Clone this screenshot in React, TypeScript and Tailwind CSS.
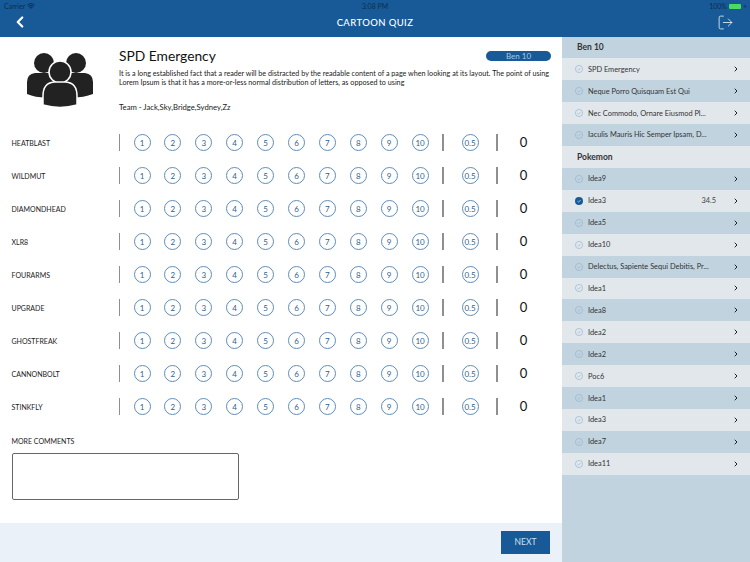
import { ChevronLeft, ChevronRight, LogOut, Wifi } from 'lucide-react';

const contestants = ['HEATBLAST', 'WILDMUT', 'DIAMONDHEAD', 'XLR8', 'FOURARMS', 'UPGRADE', 'GHOSTFREAK', 'CANNONBOLT', 'STINKFLY'];
const scores = ['1', '2', '3', '4', '5', '6', '7', '8', '9', '10'];

const ben10 = ['SPD Emergency', 'Neque Porro Quisquam Est Qui', 'Nec Commodo, Ornare Eiusmod Pl...', 'Iaculis Mauris Hic Semper Ipsam, D...'];
const pokemon = ['Idea9', 'Idea3', 'Idea5', 'Idea10', 'Delectus, Sapiente Sequi Debitis, Pr...', 'Idea1', 'Idea8', 'Idea2', 'Idea2', 'Poc6', 'Idea1', 'Idea3', 'Idea7', 'Idea11'];

function Circle({ label }: { label: string }) {
  return (
    <div className="flex h-[17px] w-[17px] shrink-0 items-center justify-center rounded-full border border-[#5f8db8] text-[8px] text-[#2f5f8f]">
      {label}
    </div>
  );
}

function Row({ name }: { name: string }) {
  return (
    <div className="flex h-[33px] items-center">
      <div className="w-[107px] pt-[1px] text-[7px] text-[#222]">{name}</div>
      <div className="h-[17px] w-[1.5px] bg-[#8f8f8f]" />
      <div className="ml-[13.5px] flex gap-[13.9px]">
        {scores.map((s) => (
          <Circle key={s} label={s} />
        ))}
      </div>
      <div className="ml-[13.5px] h-[17px] w-[1.5px] bg-[#8f8f8f]" />
      <div className="ml-[18px]">
        <Circle label="0.5" />
      </div>
      <div className="ml-[17.5px] h-[17px] w-[1.5px] bg-[#8f8f8f]" />
      <div className="ml-[18px] w-[16px] text-center text-[13px] text-[#111]">0</div>
    </div>
  );
}

function CheckIcon({ done }: { done?: boolean }) {
  return (
    <svg viewBox="0 0 8 8" className="h-[8px] w-[8px] shrink-0">
      <circle cx="4" cy="4" r={done ? 4 : 3.6} fill={done ? '#175a97' : 'none'} stroke={done ? 'none' : '#8fb0cc'} strokeWidth="0.6" />
      <path d="M2.4 4.1 3.6 5.2 5.6 3" fill="none" stroke={done ? '#fff' : '#8fb0cc'} strokeWidth="0.6" />
    </svg>
  );
}

function SideItem({ label, blue, done, score }: { label: string; blue: boolean; done?: boolean; score?: string }) {
  return (
    <div className={`flex h-[21.93px] items-center pl-[13px] pr-[10px] text-[7.4px] text-[#333] ${blue ? 'bg-[#c2d3e0]' : 'bg-[#e2e7ec]'}`}>
      <CheckIcon done={done} />
      <div className="ml-[5px] flex-1 truncate">{label}</div>
      {score && <div className="mr-[16px] text-[#444]">{score}</div>}
      <ChevronRight size={8} strokeWidth={3} className="text-[#222]" />
    </div>
  );
}

function TeamIcon() {
  return (
    <svg viewBox="0 0 66 56" className="h-[56px] w-[66px]" fill="#222">
      <circle cx="17" cy="11" r="10" />
      <circle cx="49" cy="11" r="10" />
      <path d="M0 30 Q0 22 8 21 L26 21 Q34 22 34 30 L34 44 Q14 48 0 42Z" />
      <path d="M32 30 Q32 22 40 21 L58 21 Q66 22 66 30 L66 42 Q50 48 32 44Z" />
      <circle cx="33" cy="20" r="11" stroke="#fff" strokeWidth="1.5" />
      <path d="M16 44 Q16 31 27 30 L39 30 Q50 31 50 44 L50 53 Q33 58 16 53Z" stroke="#fff" strokeWidth="1.5" />
    </svg>
  );
}

export default function App() {
  return (
    <div className="flex h-[562px] w-[750px] flex-col overflow-hidden bg-white font-['Lato',sans-serif]">
      <div className="relative flex h-[37px] shrink-0 items-center justify-center bg-[#175a97] pt-[10px]">
        <div className="absolute left-[4px] top-[1px] flex items-center gap-[2px] text-[7px] text-[#0b2f52]">
          Carrier <Wifi size={8} strokeWidth={3} />
        </div>
        <div className="absolute left-1/2 top-[1px] -translate-x-1/2 text-[7px] text-[#0b2f52]">3:08 PM</div>
        <div className="absolute right-[3px] top-[1px] flex items-center gap-[1px] text-[7px] text-[#0b2f52]">
          100%
          <div className="ml-[1px] h-[5px] w-[12px] rounded-[1px] bg-[#4cd964]" />
          <span className="ml-[1px]">+</span>
        </div>
        <ChevronLeft size={18} strokeWidth={3} className="absolute left-[11px] top-[13px] text-white" />
        <div className="text-[9.5px] font-medium tracking-[0.4px] text-white">CARTOON QUIZ</div>
        <LogOut size={17} strokeWidth={1.3} className="absolute right-[16px] top-[14px] text-[#d5e3ef]" />
      </div>

      <div className="flex min-h-0 flex-1">
        <div className="flex w-[562px] shrink-0 flex-col">
          <div className="flex-1 pl-[11.5px]">
            <div className="flex h-[89px] pt-[9px]">
              <div className="ml-[15.5px] mt-[6px] w-[92px] shrink-0">
                <TeamIcon />
              </div>
              <div className="w-[432px]">
                <div className="flex items-start justify-between">
                  <div className="text-[13.8px] leading-[19px] text-[#111]">SPD Emergency</div>
                  <div className="mt-[5px] flex h-[10px] w-[65px] items-center justify-center rounded-full bg-[#175a97] text-[8px] text-[#a9c8e4]">
                    Ben 10
                  </div>
                </div>
                <div className="mt-[4px] w-[436px] text-[7.2px] leading-[9px] text-[#222]">
                  It is a long established fact that a reader will be distracted by the readable content of a page when looking at its layout. The point of using Lorem Ipsum is that it has a more-or-less normal distribution of letters, as opposed to using
                </div>
                <div className="mt-[15px] text-[7.7px] text-[#222]">Team - Jack,Sky,Bridge,Sydney,Zz</div>
              </div>
            </div>
            <div>
              {contestants.map((c) => (
                <Row key={c} name={c} />
              ))}
            </div>
            <div className="mt-[13px] text-[7px] text-[#222]">MORE COMMENTS</div>
            <div className="ml-[0.5px] mt-[6px] h-[47px] w-[227px] rounded-[2px] border border-[#666]" />
          </div>
          <div className="flex h-[39px] shrink-0 items-center justify-end bg-[#eaf1f8] pr-[12px]">
            <div className="flex h-[23px] w-[49px] items-center justify-center bg-[#175a97] text-[8.5px] text-[#cfe0ef]">NEXT</div>
          </div>
        </div>

        <div className="flex-1 bg-[#c2d3e0]">
          <div className="flex h-[21.3px] items-center pl-[15px] text-[8.5px] font-bold text-[#333]">Ben 10</div>
          {ben10.map((t, i) => (
            <SideItem key={t} label={t} blue={i % 2 === 1} />
          ))}
          <div className="flex h-[21.93px] items-center bg-[#e2e7ec] pl-[15px] text-[8.5px] font-bold text-[#333]">Pokemon</div>
          {pokemon.map((t, i) => (
            <SideItem key={i} label={t} blue={i % 2 === 0} done={i === 1} score={i === 1 ? '34.5' : undefined} />
          ))}
        </div>
      </div>
    </div>
  );
}
